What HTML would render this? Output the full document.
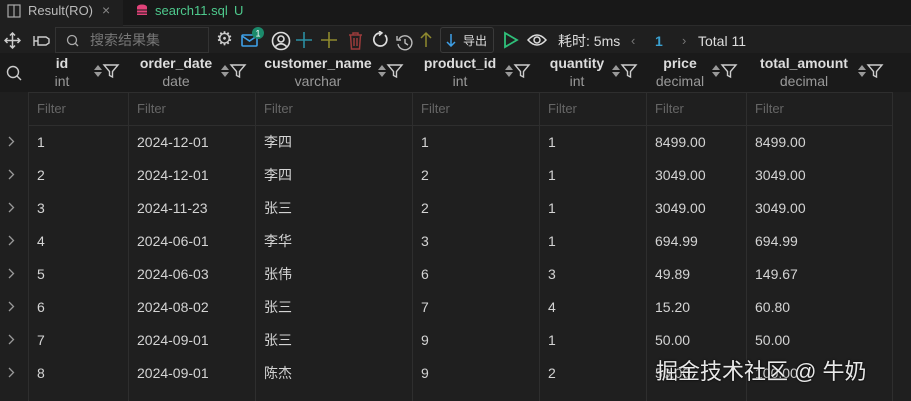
<!DOCTYPE html><html><head><meta charset="utf-8"><style>
*{box-sizing:border-box;margin:0;padding:0}
body{width:911px;height:401px;overflow:hidden;background:#1f1f1f;font-family:"Liberation Sans","Noto Sans CJK SC",sans-serif;color:#ccc;position:relative}
.a{position:absolute;white-space:nowrap;line-height:18px}
.tabs{position:absolute;left:0;top:0;width:911px;height:26px;background:#181818;border-bottom:1px solid #2b2b2b}
.vl{position:absolute;top:92px;height:309px;width:1px;background:#2e2e2e}
.hl{position:absolute;left:28px;width:864px;height:1px;background:#2e2e2e}
.h1{font-size:14px;font-weight:bold;color:#ddd;text-align:center}
.h2{font-size:14px;color:#999;text-align:center}
.f{font-size:13px;color:#666}
.c{font-size:14px;color:#d4d4d4}
</style></head><body>
<div class="tabs"></div>
<div class="a" style="left:0;top:0;width:123px;height:26px;background:#1f1f1f"></div>
<svg class="a" style="left:7px;top:4px" width="14" height="14"><rect x="1" y="1" width="12" height="12" fill="none" stroke="#aaa" stroke-width="1.2"/><line x1="7" y1="1" x2="7" y2="13" stroke="#aaa" stroke-width="1.2"/></svg>
<div class="a" style="left:28px;top:2px;font-size:13px;color:#bbb">Result(RO)</div>
<div class="a" style="left:102px;top:1px;font-size:14px;color:#888">×</div>
<svg class="a" style="left:137px;top:4px" width="10" height="13"><ellipse cx="5" cy="3" rx="5" ry="2.5" fill="#e2437a"/><rect x="0" y="3" width="10" height="8" fill="#e2437a"/><line x1="0" y1="6" x2="10" y2="6" stroke="#181818"/><line x1="0" y1="9" x2="10" y2="9" stroke="#181818"/></svg>
<div class="a" style="left:155px;top:2px;font-size:13px;color:#4ec98d">search11.sql</div>
<div class="a" style="left:234px;top:2px;font-size:13px;color:#4ec98d">U</div>
<!-- toolbar -->
<svg class="a" style="left:4px;top:32px" width="17" height="17"><path d="M8.5 1V16M1 8.5H16M6 3.5L8.5 1L11 3.5M6 13.5L8.5 16L11 13.5M3.5 6L1 8.5L3.5 11M13.5 6L16 8.5L13.5 11" fill="none" stroke="#ccc" stroke-width="1.5"/></svg>
<svg class="a" style="left:33px;top:35px" width="17" height="12"><path d="M1 1V11M1 6H5M5 2H13L16 4V8L13 10H5Z" fill="none" stroke="#ccc" stroke-width="1.4"/></svg>
<div class="a" style="left:55px;top:27px;width:154px;height:26px;border:1px solid #333;background:#1f1f1f"></div>
<svg class="a" style="left:66px;top:34px" width="13" height="13"><circle cx="6" cy="6" r="4.5" fill="none" stroke="#aaa" stroke-width="1.3"/><line x1="9" y1="9" x2="12" y2="12" stroke="#aaa" stroke-width="1.3"/></svg>
<div class="a" style="left:90px;top:31px;font-size:14px;color:#777">搜索结果集</div>
<div class="a" style="left:216px;top:30px;font-size:19px;color:#ccc;line-height:20px">⚙</div>
<svg class="a" style="left:241px;top:26px" width="24" height="24"><rect x="1" y="9" width="15" height="11" rx="1" fill="none" stroke="#3ea0e8" stroke-width="1.6"/><path d="M1 10 L8.5 15 L16 10" fill="none" stroke="#3ea0e8" stroke-width="1.6"/><circle cx="17" cy="7" r="6" fill="#1b8a6b"/><text x="17" y="10.5" font-size="9" fill="#fff" text-anchor="middle" font-family="Liberation Sans">1</text></svg>
<svg class="a" style="left:271px;top:31px" width="20" height="20"><circle cx="10" cy="10" r="8.5" fill="none" stroke="#ddd" stroke-width="1.6"/><circle cx="10" cy="8" r="3" fill="none" stroke="#ddd" stroke-width="1.6"/><path d="M4.5 15.5 Q10 10 15.5 15.5" fill="none" stroke="#ddd" stroke-width="1.6"/></svg>
<svg class="a" style="left:296px;top:32px" width="16" height="16"><path d="M8 0V16M0 8H16" stroke="#2b8fa3" stroke-width="1.6"/></svg>
<svg class="a" style="left:321px;top:32px" width="16" height="16"><path d="M8 0V16M0 8H16" stroke="#8f8a2e" stroke-width="1.6"/></svg>
<svg class="a" style="left:347px;top:31px" width="17" height="19"><path d="M2 4 H15 M6 4 V2 H11 V4 M3.5 4 L4.5 18 H12.5 L13.5 4 M7 7 V15 M10 7 V15" fill="none" stroke="#9a3b3b" stroke-width="1.5"/></svg>
<svg class="a" style="left:372px;top:31px" width="17" height="17"><path d="M13 4A6.5 6.5 0 1 1 8.5 2" fill="none" stroke="#ddd" stroke-width="1.7"/><path d="M7 0L10 2L7 4.5" fill="none" stroke="#ddd" stroke-width="1.5"/></svg>
<svg class="a" style="left:396px;top:34px" width="17" height="17"><path d="M3 5A7 7 0 1 1 2 10" fill="none" stroke="#bbb" stroke-width="1.4"/><path d="M1 2V6H5" fill="none" stroke="#bbb" stroke-width="1.4"/><path d="M9 5V9L12 11" fill="none" stroke="#bbb" stroke-width="1.4"/></svg>
<svg class="a" style="left:420px;top:31px" width="12" height="17"><path d="M6 16V2M1 7L6 2L11 7" fill="none" stroke="#8f8a2e" stroke-width="1.5"/></svg>
<div class="a" style="left:440px;top:27px;width:54px;height:26px;border:1px solid #3a3a3a;border-radius:3px"></div>
<svg class="a" style="left:446px;top:33px" width="10" height="14"><path d="M5 1V13M1 9L5 13L9 9" fill="none" stroke="#3ea0e8" stroke-width="1.5"/></svg>
<div class="a" style="left:463px;top:32px;font-size:12px;color:#ddd">导出</div>
<svg class="a" style="left:503px;top:31px" width="16" height="18"><path d="M2 2 L14 9 L2 16 Z" fill="none" stroke="#2fc07a" stroke-width="1.8"/></svg>
<svg class="a" style="left:527px;top:33px" width="20" height="14"><path d="M1 7 Q10 -3 19 7 Q10 17 1 7Z" fill="none" stroke="#ddd" stroke-width="1.5"/><circle cx="10" cy="7" r="3" fill="none" stroke="#ddd" stroke-width="1.5"/></svg>
<div class="a" style="left:558px;top:32px;font-size:14px;color:#ddd">耗时: 5ms</div>
<div class="a" style="left:631px;top:32px;font-size:13px;color:#777">‹</div>
<div class="a" style="left:655px;top:32px;font-size:14px;font-weight:bold;color:#3aa0d0">1</div>
<div class="a" style="left:682px;top:32px;font-size:13px;color:#777">›</div>
<div class="a" style="left:698px;top:32px;font-size:14px;color:#ddd">Total 11</div>
<!-- header -->
<div class="a" style="left:0;top:53px;width:911px;height:39px;background:#1a1a1a"></div>
<svg class="a" style="left:6px;top:65px" width="16" height="16"><circle cx="7" cy="7" r="5.5" fill="none" stroke="#ccc" stroke-width="1.4"/><line x1="11" y1="11" x2="15" y2="15" stroke="#ccc" stroke-width="1.4"/></svg>
<div id="hdr"></div>
<div class="hl" style="top:92px"></div>
<div class="hl" style="top:125px"></div>
<div class="vl" style="left:28px"></div><div class="vl" style="left:128px"></div><div class="vl" style="left:255px"></div><div class="vl" style="left:412px"></div><div class="vl" style="left:539px"></div><div class="vl" style="left:646px"></div><div class="vl" style="left:746px"></div><div class="vl" style="left:892px"></div>
<div id="rows"></div>
<div class="a" style="left:656px;top:359px;font-size:22px;line-height:26px;color:#e8e8e8;text-shadow:0 0 2px #000">掘金技术社区 @ 牛奶</div>
<script>
var cols=[[28,128,"id","int",62],[128,255,"order_date","date",176],[255,412,"customer_name","varchar",318],[412,539,"product_id","int",460],[539,646,"quantity","int",577],[646,746,"price","decimal",680],[746,892,"total_amount","decimal",804]];
var h="";
cols.forEach(function(c){
 h+='<div class="a h1" style="left:'+(c[4]-60)+'px;width:120px;top:54px">'+c[2]+'</div>';
 h+='<div class="a h2" style="left:'+(c[4]-60)+'px;width:120px;top:72px">'+c[3]+'</div>';
 h+='<svg class="a" style="left:'+(c[1]-35)+'px;top:63px" width="30" height="16"><path d="M1 7 L5 2 L9 7Z M1 9 L5 14 L9 9Z" fill="#999"/><path d="M11 2 H25 L19.5 8.5 V14 L16.5 12.5 V8.5 Z" fill="none" stroke="#ccc" stroke-width="1.4"/></svg>';
 h+='<div class="a f" style="left:'+(c[0]+9)+'px;top:100px">Filter</div>';
});
document.getElementById('hdr').innerHTML=h;
var d=[["1","2024-12-01","李四","1","1","8499.00","8499.00"],["2","2024-12-01","李四","2","1","3049.00","3049.00"],["3","2024-11-23","张三","2","1","3049.00","3049.00"],["4","2024-06-01","李华","3","1","694.99","694.99"],["5","2024-06-03","张伟","6","3","49.89","149.67"],["6","2024-08-02","张三","7","4","15.20","60.80"],["7","2024-09-01","张三","9","1","50.00","50.00"],["8","2024-09-01","陈杰","9","2","50.00","100.00"]];
var r="";
d.forEach(function(row,i){var y=133+i*33;
 r+='<svg class="a" style="left:8px;top:'+(y+3)+'px" width="7" height="11"><path d="M1 1L5.5 5.5L1 10" fill="none" stroke="#999" stroke-width="1.3"/></svg>';
 row.forEach(function(v,j){r+='<div class="a c" style="left:'+(cols[j][0]+9)+'px;top:'+y+'px">'+v+'</div>';});
});
document.getElementById('rows').innerHTML=r;
</script>
</body></html>
